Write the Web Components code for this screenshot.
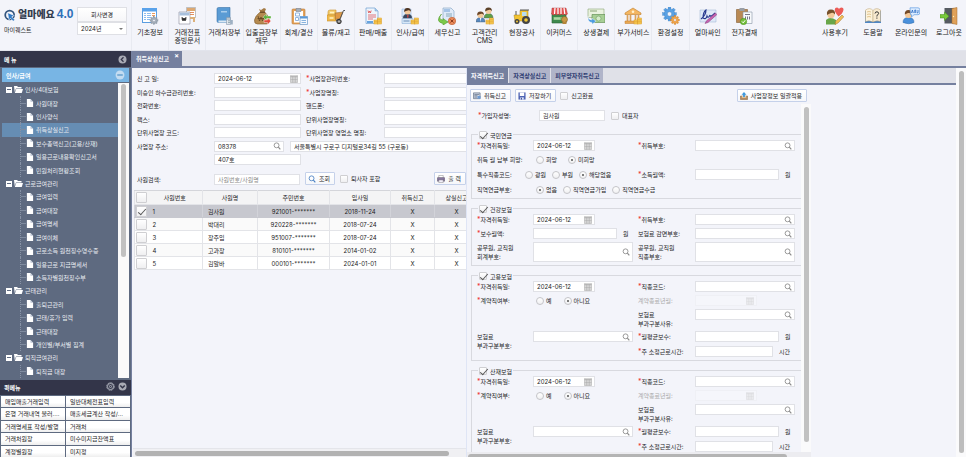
<!DOCTYPE html>
<html lang="ko">
<head>
<meta charset="utf-8">
<title>취득상실신고</title>
<style>
html,body{margin:0;height:100%}
body{font:6px/9px Inter,"Liberation Sans","Noto Sans CJK KR",sans-serif;color:#1c1c1e;background:#f3f4fa;overflow:hidden}
</style>
</head>
<body>
<erp-app></erp-app>
<script>
const BASE = `*{box-sizing:border-box}
button,input,select{font:inherit;color:inherit;margin:0}
button{cursor:pointer}
svg{display:block}
a{color:inherit;text-decoration:none}`;

function define(name, css, html) {
  customElements.define(name, class extends HTMLElement {
    connectedCallback() {
      if (this.shadowRoot) return;
      const root = this.attachShadow({ mode: 'open' });
      const get = (k, d = '') => this.getAttribute(k) ?? d;
      root.innerHTML = `<style>${BASE}${css}</style>` + html(get, this);
    }
  });
}

const person = (hair, coat, x, y) => `<g transform="translate(${x} ${y})"><path d="M0 11q0-4.500 4.500-4.500t4.500 4.500z" fill="${coat}" stroke="#456" stroke-width=".4"/><circle cx="4.500" cy="4" r="3" fill="#f3c99b"/><path d="M1.200 4.500Q.8.500 4.500.500t3.400 3.800Q7 2.500 5.500 2.800 2.500 3.200 1.200 4.500z" fill="${hair}"/></g>`;
const coins = (x, y) => `<g transform="translate(${x} ${y})" fill="#f8cc55" stroke="#d99a2b" stroke-width=".5"><rect y="3" width="4" height="2"/><rect y="5" width="4" height="2"/><rect x="3.500" y="1" width="4" height="2"/><rect x="3.500" y="3" width="4" height="2"/><rect x="3.500" y="5" width="4" height="2"/></g>`;
const gear = (cx, cy, r, fill, edge) => {
  let t = '';
  for (let i = 0; i < 8; i++) t += `<rect x="${cx - r * .2}" y="${cy - r}" width="${r * .4}" height="${r * .5}" transform="rotate(${i * 45} ${cx} ${cy})"/>`;
  return `<g fill="${fill}" stroke="${edge}" stroke-width=".3">${t}<circle cx="${cx}" cy="${cy}" r="${r * .75}"/></g><circle cx="${cx}" cy="${cy}" r="${r * .32}" fill="#f3f4fa" stroke="${edge}" stroke-width=".4"/>`;
};
const ICONS = {
  basic: `<rect x="1.500" y="1.500" width="14" height="14" fill="#fff" stroke="#5b9ee0"/><path d="M1 1h15v3.500H1z" fill="#5aa2ea"/><path d="M3 6.500h2m-2 2h2m-2 2h2m-2 2h2M6 6.500h4m-4 2h4m-4 2h4m-4 2h3" stroke="#8cbcf0"/><path d="M11 6.500h3m-3 2h3" stroke="#ec9a5a"/>${gear(13, 13.500, 4, '#a9b2bd', '#74808e')}`,
  slip: `<path d="M8.500.500h9v10h-9z" fill="#fff" stroke="#999" stroke-width=".6"/><path d="M9 1h8v3H9z" fill="#dca872"/><path d="M11 5.500h5m-5 2h5" stroke="#e4905f"/><path d="M1 5h11v12H1z" fill="#fff" stroke="#889" stroke-width=".6"/><path d="M1.500 5.500h10v3h-10z" fill="#a8c0dc"/><path d="m4 10 1 4 1-3 1 3 1-4M3.500 12h5" fill="none" stroke="#222" stroke-width=".9"/><path d="M12 11h4v4" fill="none" stroke="#ddb17a" stroke-width="2"/>`,
  book: `<path d="M2 2q0-1.500 1.500-1.500H15v15H3.500Q2 15.500 2 14z" fill="#5a9bd4" stroke="#3a72a8" stroke-width=".6"/><path d="M3.500 13.500H15v2H3.500z" fill="#dbe8f4"/><path d="M6 4h6v1.500H6z" fill="#a9cdec"/><path d="M11.500 10.500h4v7h-4z" fill="#dfe5ec" stroke="#77899c" stroke-width=".5"/><path d="M15.500 13h2.300v4.500h-2.300z" fill="#9db0c4"/><path d="M12.500 12h1m1 0h.6m-1.600 1.800h1m-1 1.800h1" stroke="#467"/>`,
  sack: `<path d="m6 2 2 1 3-2 2 1-1.500 3.500h-4z" fill="#a37a45"/><path d="M7.200 5h4.500q5.300 5 4.800 9-.500 3-3 3h-9q-3.500 0-3-4Q2 9 7.200 5z" fill="#b58a50" stroke="#7f5c2c" stroke-width=".6"/><path d="M7 5.300h5" stroke="#664521"/><path d="m5 9 1.500 5L8 10l1.500 4L11 9M4.500 11.500h7" fill="none" stroke="#5b4020" stroke-width=".7"/><path d="m10 10 3.500-3v2H18v2.500h-4.500v2z" fill="#5db13c" stroke="#fff" stroke-width=".4"/><path d="m18 14-3.500-3v2H11v2.500h3.500v2z" fill="#e14c3f" stroke="#fff" stroke-width=".4"/>`,
  account: `<rect x="2" y="2" width="13" height="15" rx="1" fill="#e5a35a" stroke="#b87935" stroke-width=".6"/><path d="M4 4h9v11.500H4z" fill="#fff"/><path d="M6 1.500h5v3H6z" fill="#a4adb8" stroke="#717b88" stroke-width=".5"/><path d="M5.500 6h4v3h-4zm0 4.500h3v3h-3z" fill="none" stroke="#92b5df"/><path d="M10 9.500h7.500v8H10z" fill="#f5f9fd" stroke="#6c9bcc" stroke-width=".7"/><path d="M10 9.500h7.500v2H10z" fill="#5a98d6"/><path d="M11.500 13.500H16m-4.500 2H16" stroke="#88b3de"/>`,
  stock: `<path d="M1 5q0-2 2-2h6v5H1z" fill="#f3cc6d" stroke="#ca922e" stroke-width=".6"/><path d="M0 8h9v6H0z" fill="#efb94e" stroke="#ca922e" stroke-width=".6"/><path d="M3 5.500h4M2.500 11h4" stroke="#fff3c2" stroke-width="1.500"/><path d="m8 6 8-1-2.500 6.500-5 1z" fill="#e09a45" stroke="#8d622d" stroke-width=".5"/><path d="M18 3.500h-1.500L13 12l-4 1.500" fill="none" stroke="#555"/><circle cx="12" cy="14.500" r="2.200" fill="#777" stroke="#333"/><circle cx="12" cy="14.500" r=".7" fill="#ddd"/>`,
  sales: `<path d="M2 1h9l3 3v12.500H2z" fill="#eef5fc" stroke="#6f9fd0" stroke-width=".7"/><path d="M11 1v3h3" fill="#aacbea" stroke="#6f9fd0" stroke-width=".5"/><path d="m4 3.500.8 2.500.8-2 .8 2 .8-2.500" fill="none" stroke="#dd4f4f" stroke-width=".8"/><path d="M4 8h8m-8 2h8m-8 2h5" stroke="#e2747a"/><path d="M3 14h6v2H3z" fill="#67a3df"/>${coins(10, 10)}`,
  hr: `<path d="M1 2h9v8H1z" fill="#dceafa" stroke="#82aada" stroke-width=".5"/>${person('#4e3422', '#37465c', 2, .5)}<path d="m6 8.500.8-1 .8 1-.5 3h-.6z" fill="#d04646"/><path d="M1 11.500h11v5H1z" fill="#d8e8f8" stroke="#7ba4d0" stroke-width=".5"/><path d="M2.500 14h6" stroke="#6a8cb6"/>${coins(10, 10)}`,
  tax: `<path d="M5 1h8l3 3v11H5z" fill="#dfeaf8" stroke="#7d9dc0" stroke-width=".6"/><path d="M6 2h6v3H6z" fill="#a5c3e6"/><path d="M8 7h6m-6 2h6" stroke="#8ab"/><path d="M3.500 7Q-.500 12 5 13.200V11.500l5 3.500-5 3.200V16.500Q-3.500 14.500 3.500 7z" fill="#7cc94a" stroke="#4a9526" stroke-width=".5"/><circle cx="14" cy="14" r="3.700" fill="#e98958" stroke="#bb5b30" stroke-width=".6"/><path d="m12.500 12.500 3 3m0-3-3 3" stroke="#8e3d1d"/>`,
  crm: `${person('#5b4028', '#5e9f48', 8, 0)}${person('#6a4528', '#5687bf', 0, 4)}<path d="m4 11 .5 4 .8-4z" fill="#fff"/>${coins(10, 10)}`,
  tractor: `<path d="M1 8h6V3.500h8V14H2z" fill="#f3c330" stroke="#a68016" stroke-width=".5"/><path d="M9 5h4.500v4H9z" fill="#b9dcef"/><path d="M7 3h9" stroke="#555"/><path d="M3 4v4" stroke="#555"/><circle cx="13" cy="13" r="4" fill="#444"/><circle cx="13" cy="13" r="1.800" fill="#f2c738"/><circle cx="4" cy="14.500" r="2.500" fill="#444"/><circle cx="4" cy="14.500" r="1" fill="#f2c738"/>`,
  shop: `<path d="M2 6h14v10H2z" fill="#3f8a4d" stroke="#2b6135" stroke-width=".6"/><path d="M2 1h14l1.500 6q-1.500 2-3 0-1.500 2-3 0-1.500 2-3 0-1.500 2-3 0-2 2-4 0z" fill="#e25353" stroke="#a93232" stroke-width=".4"/><path d="M5 1 4.500 7M8 1v6m3-6v6m3-6 .8 6" stroke="#fff" stroke-width="1.200"/><path d="M3.500 10h10v3h-10z" fill="#81c078"/><path d="M5 10.500v2m2-2v2m2-2v2" stroke="#fff" stroke-width=".7"/><circle cx="14.500" cy="12.500" r="3" fill="#c79844" stroke="#80602b" stroke-width=".6"/><path d="M12.500 16h4" stroke="#b5853a" stroke-width="2"/>`,
  pay: `<path d="M1 2h16v8.500H1z" fill="#eaf2df" stroke="#8aa576" stroke-width=".6"/><path d="M3 4h7" stroke="#8aa576"/><path d="M5 7.500h13v8H5z" fill="#a7cf95" stroke="#558548" stroke-width=".6"/><circle cx="11.500" cy="11.500" r="2.500" fill="#d5ebca" stroke="#5f9050" stroke-width=".5"/><path d="M1 9q0 4 4 4v-1.800l4 3-4 3v-1.800Q.500 15.500 1 9z" fill="#4b9ae0" stroke="#fff" stroke-width=".4"/>`,
  bank: `<path d="M1 6 9 1l8 5v1.500H1z" fill="#f4b661" stroke="#bf7d2c" stroke-width=".6"/><circle cx="9" cy="4.800" r="1.300" fill="#fff1cd"/><path d="M3.500 8v6m3-6v6m5-6v6m3-6v6" stroke="#dca25c" stroke-width="1.700"/><path d="M1 14h16v2.500H1z" fill="#eba851" stroke="#bf7d2c" stroke-width=".5"/>${coins(10, 10)}`,
  settings: `${gear(7.500, 7, 7, '#5ba2e4', '#3478bb')}${gear(13, 13, 4.500, '#f4a94d', '#bf7224')}`,
  sign: `<path d="M1 3h16v12H1z" fill="#dfe9f8" stroke="#a8bdd8" stroke-width=".6"/><path d="M2 12q5-4 5-9-3 2-3 8 3 2 4-2 1 3 3-1 0 3 5-2" fill="none" stroke="#25368d" stroke-width="1.100"/><path d="m16.500 6 1.300 1.700L9 15.500l-3 1 1.500-2.700z" fill="#c664b0" stroke="#85387c" stroke-width=".5"/>`,
  approve: `<path d="M1.500 2.500h11v13h-11z" fill="#b98954" stroke="#835c30" stroke-width=".6"/><path d="M4.500 1h5v3h-5z" fill="#999ea6"/><path d="M8 5h9v11.500H8z" fill="#f8fafc" stroke="#8795a6" stroke-width=".6"/><path d="M10 7.500h5M10.500 9.500v3m2-3v3m2-3v3" stroke="#778"/><circle cx="8.500" cy="14.500" r="3.200" fill="#73bf3b" stroke="#418b18" stroke-width=".5"/><path d="m7 14.500 1.200 1.300 2-2.500" fill="none" stroke="#fff"/>`,
  review: `<path d="M9 4.500q-1-4 2-4 1.500 0 2 1.500.500-1.500 2.500-1.500 3 0 1.500 4-1 3-4.500 5-2-2-3.500-5z" fill="#ec5b57"/><path d="M0 13q4-4 10 0v4.500H0z" fill="#69a64a"/><circle cx="5" cy="7.500" r="3.700" fill="#f3c99b"/><path d="M1 8q-.8-5.500 4-5.500 4.500 0 4 5Q7.500 5.500 6 5.800 3 6.500 1 8z" fill="#76502c"/><path d="m16 8 1.800 1.800L12 16l-3 1.500.8-3.200z" fill="#f2bd53" stroke="#9d7332" stroke-width=".5"/>`,
  help: `<path d="M1 4h16v12H1z" fill="#4e86c4"/><path d="M1.500 3Q6 0 9 3.500V15q-4-2-7.500-.500z" fill="#fdf3dc" stroke="#b7a07a" stroke-width=".5"/><path d="M16.500 3Q12 0 9 3.500V15q4-2 7.500-.500z" fill="#f8ead0" stroke="#b7a07a" stroke-width=".5"/><path d="M3 5q2-1 4 0M3 7.500q2-1 4 0M3 10q2-1 4 0" stroke="#d5b070" fill="none" stroke-width=".7"/><path d="M11 6.500q.2-1.800 2-1.700 1.700.2 1.600 1.700-.1 1-1.700 2v1m0 1v1.200" fill="none" stroke="#333"/>`,
  ask: `<path d="M1 15.500q0-5 5.500-5t5.500 5q-5 2.500-11 0z" fill="#4a91dc" stroke="#2b68aa" stroke-width=".5"/><circle cx="6.500" cy="7.500" r="3.500" fill="#f4c898"/><path d="M2.800 7.500Q2.500 3 6.500 3t3.800 4Q8 5.500 6 6z" fill="#754a27"/><path d="M8 .800h8q1.700 0 1.700 1.700V6q0 1.700-1.700 1.700h-4L9.500 10V7.700H8.500z" fill="#dcecff" stroke="#4c8edb" stroke-width=".6"/><path d="m9.500 6 .9-3 .9 3m1.500 0V3h1v3m1.200-.200h1V3" fill="none" stroke="#286ac4" stroke-width=".8"/>`,
  exit: `<path d="M4.500 1H14v15.500H4.500z" fill="#555a61"/><path d="m12 1.500 5-1v17l-5-1z" fill="#e0a159" stroke="#a66c2d" stroke-width=".5"/><circle cx="13.500" cy="9.500" r=".7" fill="#fff0b8"/><path d="M0 7.500h4.500V5L9 9.300l-4.500 4.200V11H0z" fill="#78c93b" stroke="#458c18" stroke-width=".5"/>`,
  logo: `<circle cx="8.500" cy="9" r="6.700" fill="none" stroke="#33557e" stroke-width="2.600"/><path d="m5.500 5.500 10 4.500-4 1.800 4.500 4.500-2 2-4.500-4.500-2 3.500z" fill="#2f79c5" stroke="#f3f4fa" stroke-width=".8"/>`,
  search: `<circle cx="8" cy="7.500" r="5.500" fill="#fff" fill-opacity=".4" stroke="currentColor" stroke-width="1.900"/><path d="m12 11.500 4.500 5" stroke="currentColor" stroke-width="2.600"/>`,
  calendar: `<path d="M1 1h16v16H1z" fill="#fff"/><path d="M1 2.500h16" stroke="#888" stroke-width="2"/><path d="M1.500 1v16M5.200 3v14M9 3v14M12.800 3v14M16.500 1v16M1 6.500h16M1 10h16M1 13.500h16M1 17h16" stroke="#999" stroke-width="1.200"/>`,
  form: `<path d="M1 2h15v13H1z" fill="#cfd8e6" stroke="#59677d" stroke-width="1.500"/><path d="M3 5.500h11m-11 3h7m-7 3h6" stroke="#59677d" stroke-width="1.500"/><path d="M10 9h7v6h-7z" fill="#6f9bd2"/>`,
  save: `<path d="M1 1h16v16H1z" fill="#4e63b4"/><path d="M4 1h10v8H4z" fill="#fff"/><path d="M5 12h8v5H5z" fill="#dbe2f8"/><path d="M7 13h2v4H7z" fill="#36458a"/>`,
  upload: `<path d="M1 9h16v8H1z" fill="#b58b5f" stroke="#74532f"/><path d="M4 9h10v4H4z" fill="#e8cfa9"/><path d="M9 0 3.500 6H7v5h4V6h3.500z" fill="#3d99de"/>`,
  print: `<path d="M4 1h10v6H4z" fill="#fff" stroke="#777"/><path d="M1 6h16v8H1z" fill="#77688f" stroke="#514660"/><path d="M4 11h10v6H4z" fill="#f2eefa" stroke="#777"/><path d="M2.500 8.500h13" stroke="#b3a4cd"/>`,
  file: `<path d="M2 0h8l6 6v12H2z" fill="#fff"/><path d="M10 0v6h6" fill="#bcc5d4"/>`,
  folder: `<path d="M0 2h6l2 2h7v3H4L1.500 14z" fill="#fff"/><path d="M4.500 8H18l-2.500 8H1.500z" fill="#fff"/>`,
  left: `<circle cx="9" cy="9" r="8" fill="#a9abb5"/><path d="M11 4.500 6.500 9l4.500 4.500" fill="none" stroke="#333549" stroke-width="2.500"/>`,
  down: `<circle cx="9" cy="9" r="8" fill="#a9abb5"/><path d="M4.500 7 9 11.500 13.500 7" fill="none" stroke="#333549" stroke-width="3"/>`,
  minus: `<circle cx="9" cy="9" r="8" fill="#c3dcf1"/><path d="M4 9h10" stroke="#5f9dcc" stroke-width="2.500"/>`,
  gearline: `<circle cx="9" cy="9" r="7.500" fill="none" stroke="#c6c8d1" stroke-width="1.500" stroke-dasharray="3 1"/><circle cx="9" cy="9" r="6" fill="none" stroke="#c6c8d1" stroke-width="1.500"/><circle cx="9" cy="9" r="2.200" fill="none" stroke="#c6c8d1" stroke-width="1.500"/>`
};

define('ui-icon', `:host{display:inline-block;flex:none;width:var(--size,8px);height:var(--size,8px)}svg{width:100%;height:100%}`,
  g => `<svg viewBox="0 0 18 18" aria-hidden="true">${ICONS[g('name')]}</svg>`);

define('ui-menu-button', `:host{display:block;min-width:0}
button{width:100%;height:100%;border:0;background:none;padding:7px 0 0;display:flex;flex-direction:column;align-items:center;font-size:7px;line-height:8px;color:#222;white-space:nowrap}
ui-icon{--size:18px;margin-bottom:4px}
span{display:block}`,
  g => `<button type="button"><ui-icon name="${g('icon')}"></ui-icon>${g('label').split('|').map(t => `<span>${t}</span>`).join('')}</button>`);

define('ui-button', `:host{display:block}
button{height:13px;padding:0 4px 0 2px;display:flex;align-items:center;gap:3px;border:1px solid #c5d1ea;border-radius:1px;background:linear-gradient(#fff,#f6f7fa);white-space:nowrap;line-height:9px}
ui-icon{color:#477fc3}`,
  g => `<button type="button">${g('icon') ? `<ui-icon name="${g('icon')}"></ui-icon>` : ''}<slot></slot></button>`);

define('ui-check', `:host{display:inline-block}
label{display:flex;align-items:center;gap:3px;white-space:nowrap}
input{appearance:none;flex:none;width:var(--box,8px);height:var(--box,8px);border:1px solid #cfcfd2;border-radius:1px;background:linear-gradient(#fff,#efeff1);display:grid;place-items:center}
input:checked::before{content:"";width:7px;height:3px;border:solid #555;border-width:0 0 1px 1px;transform:rotate(-48deg)}`,
  g => `<label><input type="checkbox" aria-label="${g('name')}" ${g('checked', null) !== null ? 'checked' : ''}><slot></slot></label>`);

define('ui-field', `:host{display:grid;grid-template-columns:var(--lab,56px) minmax(0,1fr);align-items:start;padding-top:1px;min-width:0}
label,.name{padding-top:1px;white-space:nowrap;line-height:9px}
i{color:#e33;font-style:normal;font-size:7px;line-height:1px}
.row{display:flex;align-items:center;gap:6px;min-width:0}
.box{display:flex;align-items:center;width:var(--w,100%);height:var(--h,11px);background:#fff;border:1px solid #e0e1e6;padding-right:2px;min-width:0}
input[type=text]{flex:1;min-width:0;width:100%;height:100%;border:0;padding:0 3px;background:none;outline:0}
input::placeholder{color:#888;opacity:1}
.box button{border:0;padding:0;background:none;color:#888;display:flex}
:host([disabled]){color:#aaa}:host([disabled]) .box{background:#f5f6fb;border-color:#eff0f5}:host([disabled]) ui-icon{opacity:.35}
.radios{display:flex;gap:var(--gap,6px);height:11px;align-items:center;padding-left:3px}
.radios label{display:flex;align-items:center;gap:2px;padding:0}
input[type=radio]{appearance:none;width:8px;height:8px;margin:0;border:1px solid #c4c4c8;border-radius:50%;background:linear-gradient(#fff,#f0f0f2);display:grid;place-items:center}
input[type=radio]:checked::before{content:"";width:2px;height:2px;border-radius:50%;background:#555}`,
  g => {
    const text = (g('required', null) !== null ? '<i>*</i>' : '') + g('label').replace('|', '<br>');
    if (g('options')) return `<span class="name" id="n">${text}</span><div class="radios" role="radiogroup" aria-labelledby="n">${g('options').split(',').map(o =>
      `<label><input type="radio" name="r" ${o === g('value') ? 'checked' : ''}>${o}</label>`).join('')}</div>`;
    const icon = g('icon');
    return `<label for="f">${text}</label><div class="row"><div class="box"><input id="f" type="text" value="${g('value')}" placeholder="${g('placeholder')}" ${g('disabled', null) !== null ? 'disabled' : ''} ${g('label') ? '' : `aria-label="${g('name')}"`}>${icon ? `<button type="button" aria-label="${icon === 'search' ? '찾기' : '달력'}"><ui-icon name="${icon}"></ui-icon></button>` : ''}</div>${g('unit') ? `<span>${g('unit')}</span>` : ''}<slot></slot></div>`;
  });

const MENU = [['basic', '기초정보'], ['slip', '거래전표|증빙문서'], ['book', '거래처장부'], ['sack', '입출금장부|재무'], ['account', '회계/결산'], ['stock', '물류/재고'], ['sales', '판매/매출'], ['hr', '인사/급여'], ['tax', '세무신고'], ['crm', '고객관리|CMS'], ['tractor', '현장공사'], ['shop', '이커머스'], ['pay', '상생결제'], ['bank', '부가서비스'], ['settings', '환경설정'], ['sign', '얼마싸인'], ['approve', '전자결재']];
const USER = [['review', '사용후기'], ['help', '도움말'], ['ask', '온라인문의'], ['exit', '로그아웃']];
const buttons = list => list.map(([i, l]) => `<ui-menu-button icon="${i}" label="${l}"></ui-menu-button>`).join('');

define('top-bar', `:host{display:flex;background:#f3f4fa;border-bottom:1px solid #e2e4ec}
.brand{width:131px;flex:none;display:grid;grid-template-columns:1fr 50px;padding:7px 4px 0 4px;align-content:start;gap:0 2px}
.logo{display:flex;align-items:center;gap:2px;font-weight:900;font-size:10px;line-height:15px;white-space:nowrap;color:#333c4e;--size:12px}
.logo b{font:700 12px/15px "Liberation Sans Narrow","Liberation Sans",sans-serif;color:#2d6fb8}
.brand button,select{width:50px;height:15px;border:1px solid #dfe0e5;background:linear-gradient(#fff,#f6f6f8);padding:0}
select{appearance:none;height:13px;padding-left:3px;background:#fff}
.sel{position:relative}.sel::after{content:"";position:absolute;right:4px;top:6px;border:2px solid transparent;border-top-color:#777}
.co{padding:3px 0 0 0}
.main{display:grid;grid-template-columns:repeat(17,minmax(0,1fr));flex:0 1 632px}
.main>*{border-left:1px solid #e8eaf1}.main>:last-child{border-right:1px solid #e8eaf1}
.user{display:grid;grid-template-columns:repeat(4,38px);margin-left:auto;margin-right:-2px}`,
  () => `<div class="brand"><div class="logo"><ui-icon name="logo"></ui-icon><span>얼마에요</span><b>4.0</b></div><button type="button">회사변경</button><div class="co">마이퀘스트</div><div class="sel"><select aria-label="회계연도"><option>2024년</option></select></div></div><nav class="main">${buttons(MENU)}</nav><nav class="user">${buttons(USER)}</nav>`);

define('tree-item', `:host{display:flex;min-height:0;color:#e9ecf2}
a{flex:1;display:flex;align-items:center;gap:2px;padding-left:23px;white-space:nowrap}
:host([group]) a{padding-left:4px;--size:9px}
:host([active]){background:#668db3}
:host(:not([group])) a::before{content:"";align-self:stretch;width:5px;margin:0 -2px 0 -5px;border-left:1px dotted #8893a6;background:linear-gradient(#7f8b9f,#7f8b9f) 0 50%/5px 1px no-repeat}
.m{width:6px;height:6px;background:#fff;display:grid;place-items:center}
.m::before{content:"";width:4px;height:1px;background:#5e6a80}`,
  g => g('group', null) !== null ? `<a href="#"><span class="m"></span><ui-icon name="folder"></ui-icon><slot></slot></a>` : `<a href="#"><ui-icon name="file"></ui-icon><slot></slot></a>`);

const TREE = ['#인사/4대보험', '사원대장', '인사양식', '취득상실신고', '보수총액신고(고용/산재)', '일용근로내용확인신고서', '민원처리현황조회', '#근로급여관리', '급여입력', '급여대장', '급여명세', '급여이체', '근로소득 원천징수영수증', '일용근로 지급명세서', '소득자별원천징수부', '#근태관리', '출퇴근관리', '근태/휴가 입력', '근태대장', '개인별/부서별 집계', '#퇴직급여관리', '퇴직금 대장'];
define('side-menu', `:host{display:flex;flex-direction:column;min-height:0;background:#5e6a80;color:#fff}
header{height:16px;display:flex;align-items:center;justify-content:space-between;padding:0 4px;background:#333549;font-weight:700}
header button,h2 button{border:0;background:none;padding:0;color:inherit;display:flex}
header button{--size:9px}
h2{margin:1px 2px 0;height:14px;display:flex;align-items:center;justify-content:space-between;padding:0 4px;background:#78b5e4;font-size:6px}
h2 button{--size:10px}
.tree{flex:1;display:grid;grid-template-columns:minmax(0,1fr) 11px;margin:1px 2px 2px;min-height:0}
nav{display:grid;grid-auto-rows:minmax(0,1fr);min-height:0}
.bar{background:#fafafa;padding:1px 3px}.bar i{display:block;height:59%;border-radius:3px;background:#c1c1c1}`,
  () => `<header><span>메 뉴</span><button type="button" aria-label="접기"><ui-icon name="left"></ui-icon></button></header><h2>인사/급여<button type="button" aria-label="닫기"><ui-icon name="minus"></ui-icon></button></h2><div class="tree"><nav>${TREE.map(t => `<tree-item ${t[0] === '#' ? 'group' : ''} ${t === '취득상실신고' ? 'active' : ''}>${t.replace('#', '')}</tree-item>`).join('')}</nav><div class="bar"><i></i></div></div>`);

define('quick-menu', `:host{display:block;background:#5e6a80}
header{height:15px;display:flex;align-items:center;gap:3px;padding:0 4px;background:#333549;color:#fff;font-weight:700}
header span{flex:1}header button{border:0;background:none;padding:0;--size:9px}
nav{display:grid;grid-template-columns:1fr 1fr;grid-template-rows:repeat(5,1fr);height:62px;gap:1px;padding:1px 1px 0}
a{background:linear-gradient(#fff 60%,#eee);padding:1px 4px;white-space:nowrap;overflow:hidden}`,
  () => `<header><span>퀵메뉴</span><button type="button" aria-label="설정"><ui-icon name="gearline"></ui-icon></button><button type="button" aria-label="접기"><ui-icon name="down"></ui-icon></button></header><nav>${['매입매출거래입력', '일반대체전표입력', '은행 거래내역 불러....', '매출세금계산 작성/...', '거래명세표 작성/발행', '거래처', '거래처원장', '미수미지급잔액표', '계정별원장', '미지정'].map(t => `<a href="#">${t}</a>`).join('')}</nav>`);

define('employee-grid', `:host{display:block}
table{border-collapse:collapse;table-layout:fixed;width:344px;background:#fff}
th,td{border:1px solid #e3e4e8;padding:0;height:13px;text-align:center;font-weight:400;line-height:9px}
th{background:#f4f4f5;height:14px;border-top-color:#d4d5da}
td:nth-child(2),td:nth-child(3){text-align:left;padding-left:5px}
th:first-child,td:first-child{border-right:0}th:nth-child(2),td:nth-child(2){border-left:0}
tr:nth-child(odd) td{background:#fff}tr:nth-child(even) td{background:#fafafa}
tr.on td{background:#c7c8cf;border-color:#c7c8cf #d2d3d9}
ui-check{--box:11px;display:block;margin-left:1px}`,
  () => {
    const rows = [['1', '김사원', '921001-*******', '2018-11-24'], ['2', '박대리', '920228-*******', '2018-07-24'], ['3', '장주임', '951007-*******', '2018-07-24'], ['4', '고과장', '810101-*******', '2014-01-02'], ['5', '김알바', '000101-*******', '2024-01-01']];
    return `<table><colgroup><col style="width:13px"><col style="width:55px"><col style="width:55px"><col style="width:72px"><col style="width:61px"><col style="width:44px"><col style="width:44px"></colgroup><thead><tr><th><ui-check name="전체 선택"></ui-check></th>${['사원번호', '사원명', '주민번호', '입사일', '취득신고', '상실신고'].map(t => `<th scope="col">${t}</th>`).join('')}</tr></thead><tbody>${rows.map((r, i) => `<tr ${i ? '' : 'class="on"'}><td><ui-check name="${r[1]} 선택" ${i ? '' : 'checked'}></ui-check></td>${[...r, 'X', 'X'].map(c => `<td>${c}</td>`).join('')}</tr>`).join('')}</tbody></table>`;
  });

define('report-list', `:host{display:flex;flex-direction:column;min-width:0;min-height:0;overflow:hidden;padding-left:2px}
.form{display:grid;grid-template-columns:169px minmax(161px,1fr);grid-template-rows:repeat(7,1fr);height:95px;margin:4px 0 0 3px;--lab:77px}
.form ui-field:nth-child(odd){--w:87px}.form ui-field:nth-child(even){--lab:78px}
.form ui-field.wide:nth-child(odd){grid-column:1/-1;--w:70px}
.form .wide ui-field:first-child{flex:1;--lab:0px;--w:100%;padding:0}
.tools{display:flex;align-items:center;height:13px;margin:5px 0 5px 3px;gap:5px}
.tools ui-field{--lab:77px;--w:86px;width:163px}
.tools ui-button:last-child{margin-left:auto}
.bar{margin:auto 0 0 -1px;height:9px;background:#f0f0f3;border-top:1px solid #e4e5ea;padding:2px 17px 2px 2px}.bar i{display:block;height:5px;border-radius:3px;background:#b2b2b2}`,
  () => `<div class="form">
<ui-field label="신 고 일:" value="2024-06-12" icon="calendar"></ui-field><ui-field required label="사업장관리번호:"></ui-field>
<ui-field label="미승인 하수급관리번호:"></ui-field><ui-field required label="사업장명칭:"></ui-field>
<ui-field label="전화번호:"></ui-field><ui-field label="핸드폰:"></ui-field>
<ui-field label="팩스:"></ui-field><ui-field label="단위사업장명칭:"></ui-field>
<ui-field label="단위사업장 코드:"></ui-field><ui-field label="단위사업장 영업소 명칭:"></ui-field>
<ui-field class="wide" label="사업장 주소:" value="08378" icon="search"><ui-field name="주소" value="서울특별시 구로구 디지털로34길 55 (구로동)"></ui-field></ui-field>
<ui-field name="상세주소" value="407호" style="--lab:77px;--w:87px"></ui-field></div>
<div class="tools"><ui-field label="사원검색:" placeholder="사원번호/사원명"></ui-field><ui-button icon="search">조회</ui-button><ui-check>퇴사자 포함</ui-check><ui-button icon="print">출 력</ui-button></div>
<employee-grid></employee-grid><div class="bar"><i></i></div>`);

define('insurance-section', `:host{display:block}
fieldset{margin:0;min-width:0;border:1px solid #d8d9df;border-right:0;padding:0 0 0 5px}
legend{padding:0 1px;margin-left:1px;height:9px;line-height:9px}
.grid{display:grid;grid-template-columns:161px minmax(0,1fr);grid-template-rows:var(--rows);--lab:56px}
::slotted(ui-field){grid-column:1;--w:100px}
::slotted(ui-field[right]){grid-column:2;--lab:57px}
::slotted(ui-field[icon=calendar]){--w:62px}
::slotted(ui-field[unit]){--w:84px}`,
  g => `<fieldset><legend><ui-check checked>${g('name')}</ui-check></legend><div class="grid"><slot></slot></div></fieldset>`);

const work = name => `<insurance-section name="${name}" style="--rows:14px 14px 22px 15px 15px">
<ui-field required label="자격취득일:" value="2024-06-12" icon="calendar"></ui-field><ui-field right required label="직종코드:" icon="search"></ui-field>
<ui-field required label="계약직여부:" options="예,아니요" value="아니요" style="--gap:12px"></ui-field><ui-field right disabled label="계약종료년월:" icon="calendar"></ui-field>
<ui-field right label="보험료|부과구분사유:" icon="search"></ui-field>
<ui-field label="보험료|부과구분부호:" icon="search" style="grid-row:4/6"></ui-field><ui-field right required label="월평균보수:" unit="원" style="grid-row:4"></ui-field>
<ui-field right required class="hours" label="주 소정근로시간:" unit="시간" style="grid-row:5"></ui-field></insurance-section>`;

define('report-detail', `:host{display:flex;flex-direction:column;min-width:0;min-height:0;overflow:hidden;border-left:1px solid #dfe5f5}
.tabs{display:flex;gap:1px;height:17px;background:#e0e1e8;border-bottom:2px solid #75809f}
.tabs button{border:0;background:#b0b4c9;color:#2c3a70;font-weight:700;padding:0 4px;white-space:nowrap}
.tabs button[aria-selected=true]{background:#75809f;color:#fff}
.panel{flex:1;min-height:0;display:flex;flex-direction:column;width:min(100%,344px)}
.tools{display:flex;align-items:center;gap:4px;height:19px;padding:2px 4px 0 3px;flex:none}.tools ui-button:last-child{margin-left:auto}
.area{flex:1;min-height:0;display:grid;grid-template-columns:minmax(0,1fr) 10px}
.scroll{overflow:hidden;padding:5px 0 0 4px;display:flex;flex-direction:column;gap:5px}
.scroll>*{flex:none}
.who{height:16px;margin:0 0 0 7px;--lab:61px;--w:66px}
.hours{--w:78px}
.bar{background:#fafafb;padding:3px 2px 10px 3px}.bar i{display:block;height:100%;border-radius:3px;background:#c1c1c1}
.hbar{height:5px;width:100%;background:#ececf0;padding:2px 24px 0 1px}.hbar i{display:block;height:3px;border-radius:3px 3px 0 0;background:#b4b4b4}`,
  () => `<div class="tabs" role="tablist"><button role="tab" aria-selected="true">자격취득신고</button><button role="tab">자격상실신고</button><button role="tab">피부양자취득신고</button></div>
<div class="panel"><div class="tools"><ui-button icon="form">취득신고</ui-button><ui-button icon="save">저장하기</ui-button><ui-check>신고완료</ui-check><ui-button icon="upload">사업장정보 일괄적용</ui-button></div>
<div class="area"><div class="scroll">
<ui-field class="who" required label="가입자성명:" value="김사원"><ui-check>대표자</ui-check></ui-field>
<insurance-section name="국민연금" style="--rows:14px 15px 15px 15px">
<ui-field required label="자격취득일:" value="2024-06-12" icon="calendar"></ui-field><ui-field right required label="취득부호:" icon="search"></ui-field>
<ui-field label="취득 월 납부 희망:" options="희망,미희망" value="미희망" style="--gap:11px"></ui-field>
<ui-field label="특수직종코드:" options="광원,부원,해당없음" value="해당없음" style="--lab:45px;grid-row:3"></ui-field><ui-field right required label="소득월액:" unit="원" style="grid-row:3"></ui-field>
<ui-field label="직역연금부호:" options="없음,직역연금가입,직역연금수급" value="없음" style="grid-column:1/3"></ui-field></insurance-section>
<insurance-section name="건강보험" style="--rows:14px 14px 24px">
<ui-field required label="자격취득일:" value="2024-06-12" icon="calendar"></ui-field><ui-field right required label="취득부호:" icon="search"></ui-field>
<ui-field required label="보수월액:" unit="원"></ui-field><ui-field right label="보험료 감면부호:" icon="search"></ui-field>
<ui-field label="공무원, 교직원|회계부호:" icon="search" style="--h:20px"></ui-field><ui-field right label="공무원, 교직원|직종부호:" icon="search" style="--h:20px"></ui-field></insurance-section>
${work('고용보험')}${work('산재보험')}
</div><div class="bar"><i></i></div></div><div class="hbar"><i></i></div></div>`);

define('erp-app', `:host{display:grid;height:100vh;grid-template:51px minmax(0,1fr)/131px minmax(0,1fr)}
top-bar{grid-column:1/-1}
aside{display:flex;flex-direction:column;min-height:0;background:#5e6a80}
side-menu{flex:1}
main{display:flex;flex-direction:column;min-width:0;min-height:0;border-left:1px solid #75809f}
.tabs{height:17px;flex:none;display:flex;background:#e0e1e8;border-bottom:2px solid #75809f}
.tabs div{display:flex;gap:5px;padding:0 3px 0 4px;background:#75809f;color:#fff;font-weight:700;align-items:center}
.tabs button{border:0;background:none;padding:0;align-self:start;font-size:7px;line-height:9px;color:#fff}
.split{flex:1;min-height:0;display:grid;grid-template-columns:minmax(0,334fr) minmax(0,490fr) 10px}
.bar{background:#fafafb;padding:3px 2px 4px 3px}.bar i{display:block;height:100%;border-radius:3px;background:#bdbdbd}`,
  () => `<top-bar></top-bar><aside><side-menu></side-menu><quick-menu></quick-menu></aside><main><div class="tabs"><div><span>취득상실신고</span><button type="button" aria-label="탭 닫기">×</button></div></div><div class="split"><report-list></report-list><report-detail></report-detail><div class="bar"><i></i></div></div></main>`);
</script>
</body>
</html>
